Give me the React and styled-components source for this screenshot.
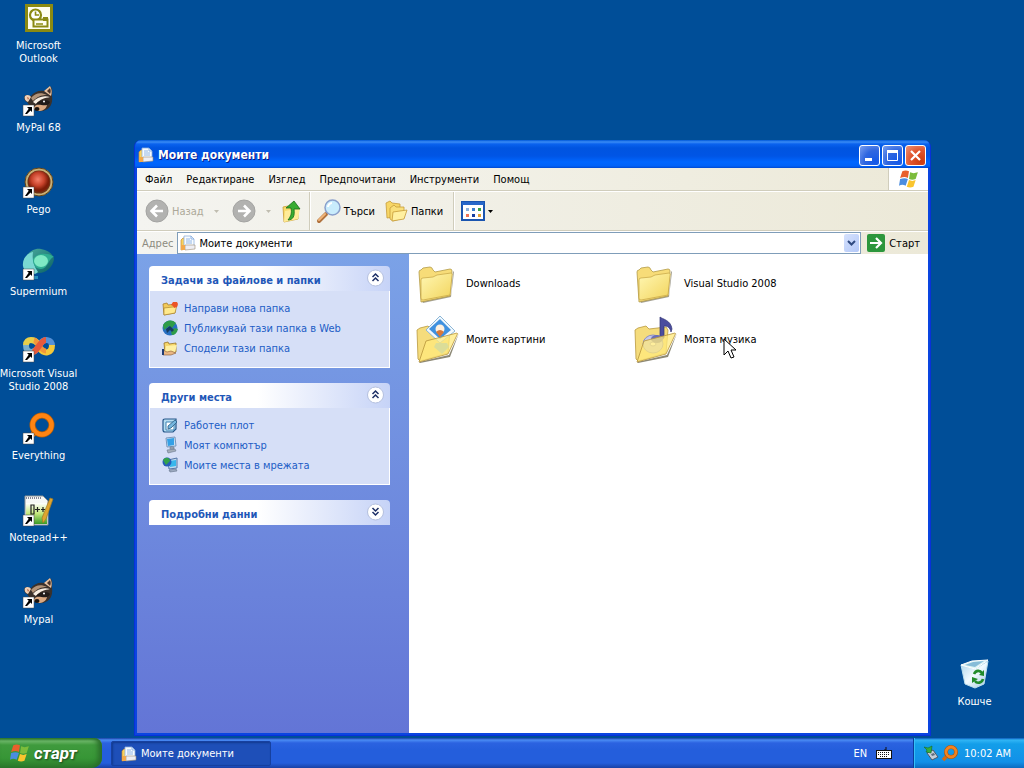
import React from 'react';
import styled, { createGlobalStyle } from 'styled-components';

const uiFont = '"DejaVu Sans Condensed", "Noto Sans", sans-serif';

const GlobalStyle = createGlobalStyle`
  * {
    box-sizing: border-box;
  }
  body {
    margin: 0;
    font-family: ${uiFont};
    font-size: 11px;
    line-height: 13px;
    cursor: default;
  }
  button, input {
    font: inherit;
    color: inherit;
  }
  svg {
    display: block;
    flex: none;
    overflow: visible;
  }
`;

const Screen = styled.div`
  min-height: 100vh;
  display: flex;
  flex-direction: column;
  overflow: hidden;
  background: #004e98;
`;

const Desktop = styled.main`
  position: relative;
  flex: 1;
`;

const IconColumn = styled.div`
  display: grid;
  grid-auto-rows: 82px;
  width: 77px;
`;

const Shortcut = styled.button`
  display: flex;
  flex-direction: column;
  align-items: center;
  gap: 5px;
  width: 77px;
  padding: 2px 0 0;
  border: 0;
  background: none;
  color: #ffffff;
  text-align: center;
`;

const ShortcutName = styled.span`
  width: 84px;
  padding: 0 ${({ $narrow }) => ($narrow ? 12 : 0)}px;
`;

const BinSpot = styled.div`
  position: absolute;
  right: 11px;
  bottom: 30px;
`;

const Window = styled.section`
  position: absolute;
  top: 140px;
  left: 134px;
  right: 93px;
  bottom: 2px;
  display: flex;
  flex-direction: column;
  padding: 0 2px 2px;
  border: solid #0831d9;
  border-width: 0 1px 1px;
  border-radius: 7px 7px 0 0;
  background: #0a45e0;
  overflow: hidden;
`;

const TitleBar = styled.header`
  display: flex;
  align-items: center;
  gap: 4px;
  height: 28px;
  margin: 0 -3px;
  padding: 2px 5px 0 4px;
  background: linear-gradient(#0058d8 0, #3a8cf5 2px, #0a62ee 4px, #0054e0 8px, #0055e5 16px, #0066ff 22px, #0062f8 26px, #0048d0 28px);
`;

const Title = styled.h1`
  flex: 1;
  margin: 0;
  color: #ffffff;
  font-size: 12px;
  line-height: 16px;
  text-shadow: 1px 1px #0a1883;
`;

const WindowControls = styled.div`
  display: flex;
  gap: 2px;
`;

const ControlButton = styled.button`
  display: grid;
  place-items: center;
  width: 21px;
  height: 21px;
  padding: 0;
  border: 1px solid #ffffff;
  border-radius: 3px;
  background: ${({ $close }) =>
    $close
      ? 'radial-gradient(circle at 80% 80%, #cc3c10, #e0552e 50%, #ee9478)'
      : 'radial-gradient(circle at 80% 80%, #1458e8, #2f66e0 50%, #7a9ff0)'};
`;

const MenuBar = styled.nav`
  display: flex;
  height: 23px;
  border-bottom: 1px solid #d0cdbc;
  background: linear-gradient(90deg, #f6f6f2, #ece9d8);
`;

const MenuItems = styled.div`
  display: flex;
  align-items: center;
  flex: 1;
  gap: 14px;
  padding-left: 8px;
`;

const MenuItem = styled.button`
  padding: 0;
  border: 0;
  background: none;
`;

const Throbber = styled.div`
  display: grid;
  place-items: center;
  width: 40px;
  border-left: 1px solid #d0cdbc;
  background: #ffffff;
`;

const Toolbar = styled.div`
  display: flex;
  align-items: center;
  height: 40px;
  padding-left: 8px;
  border-top: 1px solid #ffffff;
  border-bottom: 1px solid #d0cdbc;
  background: linear-gradient(90deg, #f4f4f0, #ece9d8);
`;

const ToolButton = styled.button`
  display: flex;
  align-items: center;
  gap: 3px;
  padding: 0;
  margin-right: ${({ $after }) => $after || 0}px;
  border: 0;
  background: none;

  &:disabled {
    color: #aca899;
  }
`;

const Divider = styled.div`
  align-self: stretch;
  width: 2px;
  margin-right: 6px;
  border-left: 1px solid #d0cdbc;
  border-right: 1px solid #ffffff;
`;

const AddressBar = styled.div`
  display: flex;
  align-items: center;
  gap: 4px;
  height: 23px;
  padding: 0 8px 0 5px;
  border-top: 1px solid #ffffff;
  background: linear-gradient(90deg, #f4f4f0, #ece9d8);
`;

const AddressLabel = styled.label`
  color: #8d8b80;
`;

const AddressBox = styled.div`
  display: flex;
  align-items: center;
  flex: 1;
  gap: 3px;
  height: 22px;
  padding: 0 1px 0 2px;
  border: 1px solid #7f9db9;
  background: #ffffff;
`;

const AddressInput = styled.input`
  flex: 1;
  min-width: 0;
  padding: 0;
  border: 0;
  outline: 0;
  background: none;
`;

const DropButton = styled.button`
  display: grid;
  place-items: center;
  width: 15px;
  height: 18px;
  padding: 0;
  border: 0;
  border-radius: 2px;
  background: linear-gradient(135deg, #d6e2fd, #b3c8f8);
`;

const GoButton = styled(ToolButton)`
  gap: 4px;
  margin-left: 2px;
`;

const Content = styled.div`
  display: flex;
  flex: 1;
  min-height: 0;
`;

const Sidebar = styled.aside`
  display: flex;
  flex-direction: column;
  gap: 15px;
  width: 272px;
  padding: 12px 19px 12px 12px;
  background: linear-gradient(#7ba2e7, #6375d6);
`;

const Panel = styled.section`
  border-radius: 4px 4px 0 0;
  overflow: hidden;
`;

const PanelHeader = styled.button`
  display: flex;
  align-items: center;
  justify-content: space-between;
  width: 100%;
  height: 25px;
  padding: 0 5px 0 12px;
  border: 0;
  background: linear-gradient(90deg, #ffffff 45%, #c6d3f7);
  color: #1f57b8;
  font-weight: bold;

  span {
    padding-top: 3px;
  }
`;

const PanelBody = styled.div`
  display: grid;
  gap: 4px;
  padding: 9px 12px 11px;
  border: 1px solid #ffffff;
  border-top: 0;
  background: #d6dff7;
`;

const TaskLink = styled.a`
  display: flex;
  align-items: center;
  gap: 6px;
  color: #215dc6;
  text-decoration: none;
`;

const FileGrid = styled.div`
  display: grid;
  flex: 1;
  grid-template-columns: repeat(auto-fill, 218px);
  grid-auto-rows: 56px;
  padding: 2px 0 0 5px;
  background: #ffffff;
`;

const FileItem = styled.button`
  position: relative;
  display: flex;
  align-items: center;
  gap: 4px;
  padding: 0 0 2px;
  border: 0;
  background: none;
`;

const PointerSpot = styled.span`
  position: absolute;
  top: 26px;
  left: 91px;
`;

const Taskbar = styled.footer`
  display: flex;
  height: 30px;
  color: #ffffff;
  background: linear-gradient(#1941a5 0, #4a8cf4 2px, #2b62e0 5px, #245edc 12px, #245edc 25px, #1941a5 30px);
`;

const StartButton = styled.button`
  display: flex;
  align-items: center;
  gap: 4px;
  width: 102px;
  padding: 0 0 0 10px;
  border: 0;
  border-radius: 0 8px 10px 0;
  background: linear-gradient(#2b7a2b 0, #6fba6b 3px, #3f9a3d 7px, #379636 20px, #2b7a2b 30px);
  box-shadow: inset -4px 0 5px #2a6e2a;
  font-family: Roboto, "Liberation Sans", sans-serif;
  font-size: 17px;
  font-style: italic;
  font-weight: bold;
  line-height: 20px;
  text-shadow: 1px 1px 2px #1c451c;
`;

const TaskButton = styled.button`
  display: flex;
  align-items: center;
  gap: 4px;
  width: 160px;
  margin: 3px auto 2px 9px;
  padding: 0 10px 0 9px;
  border: 1px solid #16409f;
  border-radius: 2px;
  background: #1e4fb8;
  box-shadow: inset 1px 1px 2px #123a8f;
`;

const Language = styled.div`
  display: flex;
  align-items: center;
  gap: 9px;
  padding-right: 21px;
`;

const Tray = styled.div`
  display: flex;
  align-items: center;
  gap: 4px;
  padding: 0 13px 0 9px;
  border-left: 1px solid #0a3e9c;
  background: linear-gradient(#0c59b9 0, #31b5f5 2px, #139ee9 6px, #1290e8 24px, #0c6bc0 30px);
  box-shadow: inset 1px 0 #35c0f8;

  time {
    margin-left: 2px;
  }
`;

function ShortcutArrow() {
  return (
    <g>
      <path d="M0 21h11v11H0z" fill="#fff" stroke="#444" strokeWidth=".5" />
      <path d="M4 23h5v5L7.500 26.500 4 30H2l3.700-5.200z" fill="#000" />
    </g>
  );
}

function OutlookIcon() {
  return (
    <svg width="32" height="32" viewBox="0 0 32 32">
      <path d="M2 2h28v28H2z" fill="#8b8a12" />
      <path d="M5 5h22v22H5z" fill="#fffef0" />
      <circle cx="12.500" cy="13" r="5.500" fill="#fff" stroke="#8b8a12" strokeWidth="2.200" />
      <path d="M12.500 9.500V13H16" fill="none" stroke="#8b8a12" strokeWidth="1.600" />
      <path d="M10.500 17.500h14v7h-14z" fill="#fffef0" stroke="#8b8a12" strokeWidth="2" />
      <path d="M20 15h5v4h-5z" fill="#8b8a12" />
      <path d="M13 22h7" stroke="#8b8a12" strokeWidth="1.500" />
    </svg>
  );
}

function RaccoonIcon() {
  return (
    <svg width="32" height="32" viewBox="0 0 32 32">
      <path d="M4 18C1 17 0 12 3 11l5 1c3-4 8-6 13-5l6-5c3 2 2 7 2 10 1 8-2 13-9 15-7 1-12-3-16-9z" fill="#3b312b" />
      <path d="M2 12c2-2 5-1 6 1l-3 5c-3-1-4-4-3-6z" fill="#f0d0b6" />
      <path d="M4 13l2 1-1 2z" fill="#b5603e" />
      <path d="M21 7l6-5c2 3 2 7 1 10z" fill="#e8c3a4" />
      <path d="M24 7l3-3c1 2 1 4 0 6z" fill="#4a352b" />
      <path d="M8 14c4-5 10-6 16-3-6 0-10 2-14 6z" fill="#b29378" />
      <path d="M10 18c4-5 11-7 17-5-5 1-10 2-14 7z" fill="#f8eee2" />
      <path d="M13 20c4-5 12-5 14-2-1 3-5 4-8 4z" fill="#211b19" />
      <path d="M12 22c3-3 7 0 12-1-1 4-4 6-9 6-4-1-5-3-3-5z" fill="#dba981" />
      <ellipse cx="14" cy="25" rx="2.500" ry="2" fill="#17120f" />
      <circle cx="21" cy="17.500" r="1" fill="#fff" />
      <ShortcutArrow />
    </svg>
  );
}

function PegoIcon() {
  return (
    <svg width="32" height="32" viewBox="0 0 32 32">
      <defs>
        <radialGradient id="pego" cx=".45" cy=".4">
          <stop offset="0" stopColor="#f4806a" />
          <stop offset=".6" stopColor="#c8432b" />
          <stop offset="1" stopColor="#7c1d08" />
        </radialGradient>
      </defs>
      <circle cx="16" cy="16" r="14" fill="#c8b077" stroke="#634418" />
      <circle cx="16" cy="16" r="11.500" fill="#6e3216" />
      <circle cx="16" cy="15.500" r="10.500" fill="url(#pego)" />
      <ShortcutArrow />
    </svg>
  );
}

function SupermiumIcon() {
  return (
    <svg width="32" height="32" viewBox="0 0 32 32">
      <defs>
        <linearGradient id="sm" x1="0" y1="0" x2="1" y2="1">
          <stop offset="0" stopColor="#4cae9f" />
          <stop offset="1" stopColor="#075f64" />
        </linearGradient>
      </defs>
      <path d="M1 14C4 4 11 0 18 1c7 1 12 5 13 10-1 8-8 14-15 14C9 26 2 22 1 14z" fill="url(#sm)" />
      <path d="M0 18C-1 11 4 5 10 4c-1 7 0 13 5 20-5 5-14 1-15-6z" fill="#7ad8d2" />
      <path d="M10 11c4-7 17-6 21-2-5 0-6 12-13 12-5 0-8-4-8-10z" fill="#2fae92" />
      <ellipse cx="18" cy="13" rx="7" ry="6" fill="#7fe9c4" />
      <path d="M11 28h4v3h-4z" fill="#2590bd" />
      <ShortcutArrow />
    </svg>
  );
}

function VisualStudioIcon() {
  return (
    <svg width="32" height="32" viewBox="0 0 32 32">
      <g fill="none" strokeWidth="6">
        <path d="M15 14C12 9 3 8 3 15" stroke="#e8cf4a" />
        <path d="M3 15c0 8 7 9 12 3" stroke="#78aecd" />
        <path d="M17 14c4-6 12-5 12 2" stroke="#5590d6" />
        <path d="M29 15c0 9-8 9-12 4" stroke="#f3c83a" />
        <path d="M11 10c4 1 6 11 12 11" stroke="#f2963a" strokeWidth="5" />
        <path d="M9 22c5 1 8-12 14-12" stroke="#e65a3c" />
      </g>
      <ShortcutArrow />
    </svg>
  );
}

function EverythingIcon() {
  return (
    <svg width="32" height="32" viewBox="0 0 32 32">
      <path d="M12 20l-6 7" stroke="#ff8412" strokeWidth="5" />
      <circle cx="19" cy="13" r="9.500" fill="none" stroke="#b65e08" strokeWidth="6" />
      <circle cx="19" cy="13" r="9.500" fill="none" stroke="#ff8412" strokeWidth="4.500" />
      <ShortcutArrow />
    </svg>
  );
}

function NotepadIcon() {
  return (
    <svg width="32" height="32" viewBox="0 0 32 32">
      <defs>
        <linearGradient id="grass" x2="0" y2="1">
          <stop offset="0" stopColor="#fff" />
          <stop offset=".5" stopColor="#c4e87c" />
          <stop offset="1" stopColor="#3a9a26" />
        </linearGradient>
      </defs>
      <path d="M2 2h18l5 5v24H2z" fill="#f6f8f6" stroke="#8c9295" />
      <path d="M3 9h21v21H3z" fill="url(#grass)" />
      <path d="M3 4h16" stroke="#889" strokeWidth="2" strokeDasharray="1 1" />
      <path d="M8 11h3v9H8zM12 15.500h5m-2.500-2.500v5M18 15.500h4m-2-2.500v5" fill="none" stroke="#222" strokeWidth="1.200" />
      <path d="M27 4l3 1-7 20-3 4-1-5z" fill="#e0a52f" stroke="#a07a24" strokeWidth=".7" />
      <ShortcutArrow />
    </svg>
  );
}

function RecycleIcon() {
  return (
    <svg width="32" height="32" viewBox="0 0 32 32">
      <defs>
        <linearGradient id="bin" x2="1" y2="1">
          <stop offset="0" stopColor="#a9d3ea" />
          <stop offset=".5" stopColor="#f1faff" />
          <stop offset="1" stopColor="#9dc4df" />
        </linearGradient>
      </defs>
      <path d="M2 7l14 4 13-8-4 23-9 4-10-4z" fill="url(#bin)" stroke="#bde0ef" />
      <path d="M2 7l11-4 16-1-13 9z" fill="#ddf4f6" stroke="#fff" />
      <path d="M6 7l8-3 11-1-9 6z" fill="#86bcd8" />
      <g fill="none" stroke="#218b2b" strokeWidth="2.600">
        <path d="M15 16c2-4 6-4 8-1" />
        <path d="M24 21c-1 4-6 5-8 2" />
      </g>
      <path d="M25 12v6l-5-1zM13 25v-6l6 2z" fill="#218b2b" />
    </svg>
  );
}

function DocumentsIcon() {
  return (
    <svg width="16" height="16" viewBox="0 0 16 16">
      <path d="M1 5l2-2h3v11l-5 1z" fill="#fbd25c" stroke="#c08a34" strokeWidth=".7" />
      <path d="M4 1h7l3 3v8H4z" fill="#f8fcff" stroke="#8fb0dc" strokeWidth=".8" />
      <path d="M11 1v3h3M6 4h4M6 6h6M6 8h6" stroke="#77a3df" strokeWidth=".8" fill="none" />
      <path d="M5 10h10v4l-10 1z" fill="#eeeef4" stroke="#9c8c72" strokeWidth=".6" />
      <path d="M1 10h4v5H1z" fill="#f3a94b" />
    </svg>
  );
}

function WindowsFlag({ size = 18 }) {
  return (
    <svg width={size} height={size} viewBox="0 0 18 18">
      <path d="M3 2c2-1 4-1 6 0L8 8C6 7 4 7 1 8z" fill="#e8602c" />
      <path d="M10 3c2 1 4 1 7 0l-2 6c-2 1-4 1-6 0z" fill="#7cbc3b" />
      <path d="M1 9c3-1 5-1 7 0l-2 6c-2-1-4-1-6 0z" fill="#4b8de0" />
      <path d="M9 10c2 1 4 1 6 0l-2 6c-2 1-4 1-6 0z" fill="#fac52e" />
    </svg>
  );
}

function NavArrow({ forward }) {
  return (
    <svg width="24" height="24" viewBox="0 0 24 24">
      <circle cx="12" cy="12" r="11" fill="#b2b2b0" stroke="#a4a4a2" />
      <path
        d={forward ? 'M6 12h11M12 6.500l5.500 5.500-5.500 5.500' : 'M18 12H7m5-5.500L6.500 12l5.500 5.500'}
        fill="none"
        stroke="#fff"
        strokeWidth="2.600"
      />
    </svg>
  );
}

function Caret({ color = '#000' }) {
  return (
    <svg width="5" height="3" viewBox="0 0 5 3">
      <path d="M0 0h5L2.500 3z" fill={color} />
    </svg>
  );
}

function UpIcon() {
  return (
    <svg width="22" height="24" viewBox="0 0 22 24">
      <path d="M2 8l5-1 2 2 8-1v12l-14 3z" fill="#f8db69" stroke="#c99c35" strokeWidth=".8" />
      <path d="M4 12l15-3-2 11-14 3z" fill="#ffec98" />
      <path d="M7 21c5 0 7-4 6-11h6l-6-8-8 7h5c1 5 0 8-3 12z" fill="#38ac31" stroke="#176c19" strokeWidth=".8" />
    </svg>
  );
}

function SearchIcon() {
  return (
    <svg width="24" height="24" viewBox="0 0 24 24">
      <path d="M9 15l-7 7" stroke="#b0713c" strokeWidth="4" strokeLinecap="round" />
      <path d="M8 15l-6 6" stroke="#efb479" strokeWidth="2" strokeLinecap="round" />
      <circle cx="15.500" cy="8.500" r="7.500" fill="#c9ecfc" stroke="#8aa0cc" strokeWidth="1.500" />
      <path d="M11 8c0-2 2-4 4-4" fill="none" stroke="#fff" strokeWidth="2" />
    </svg>
  );
}

function FoldersIcon() {
  return (
    <svg width="23" height="22" viewBox="0 0 23 22">
      <g stroke="#c79c38" strokeWidth=".8">
        <path d="M1 3l4-2 2 2 8 1v12l-13 2z" fill="#f7d666" />
        <path d="M5 8l4-3 2 2h8v11L8 21l-3-2z" fill="#f9df7a" />
        <path d="M8 12l14-2-3 9-12 2z" fill="#fff0a0" />
      </g>
    </svg>
  );
}

function ViewsIcon() {
  return (
    <svg width="24" height="20" viewBox="0 0 24 20">
      <path d="M1 1h22v18H1z" fill="#fff" stroke="#1a55b0" strokeWidth="2" />
      <path d="M1 1h22v3H1z" fill="#2767c9" />
      <path d="M5 7h3v3H5z" fill="#8cb0dc" />
      <path d="M11 7h3v3h-3z" fill="#3a80cd" />
      <path d="M17 7h3v3h-3z" fill="#35a243" />
      <path d="M5 13h3v3H5z" fill="#ef7355" />
      <path d="M11 13h3v3h-3z" fill="#173ea0" />
      <path d="M17 13h3v3h-3z" fill="#e3a131" />
    </svg>
  );
}

function GoIcon() {
  return (
    <svg width="18" height="18" viewBox="0 0 18 18">
      <rect width="18" height="18" rx="2" fill="#2c963c" />
      <path d="M3 9h11M9 4l5 5-5 5" fill="none" stroke="#fff" strokeWidth="2.200" />
    </svg>
  );
}

function ChevronCircle({ down }) {
  return (
    <svg width="19" height="19" viewBox="0 0 19 19">
      <circle cx="9.500" cy="9" r="8" fill="#fff" stroke="#b3bfde" />
      <path
        d={down ? 'M6.500 5l3 3 3-3M6.500 9l3 3 3-3' : 'M6.500 8l3-3 3 3M6.500 12l3-3 3 3'}
        fill="none"
        stroke="#1d2f66"
        strokeWidth="1.500"
      />
    </svg>
  );
}

function NewFolderIcon() {
  return (
    <svg width="16" height="16" viewBox="0 0 16 16">
      <path d="M1 4l4-1 1 2 8-1-1 9-11 2z" fill="#f2c957" stroke="#a9802c" strokeWidth=".8" />
      <path d="M2 8l9-1 4-2-2 8-11 2z" fill="#ffe98c" stroke="#a17926" strokeWidth=".6" />
      <path d="M11 2h4l1 2-1 3-3 1-1-2-2-1z" fill="#eb5425" />
    </svg>
  );
}

function WebIcon() {
  return (
    <svg width="16" height="16" viewBox="0 0 16 16">
      <circle cx="8" cy="8" r="7.500" fill="#276fc2" />
      <path d="M1 5c3-5 9-6 13-2l-4 5-3-2-5 4zM9 12l3-4 4 1c-1 4-3 6-6 6z" fill="#2f9c48" />
      <path d="M4 9l4-3 4 4-2 2-2-2-3 3z" fill="#163d61" />
    </svg>
  );
}

function ShareFolderIcon() {
  return (
    <svg width="16" height="16" viewBox="0 0 16 16">
      <path d="M2 3l4-1 1 2 7-1v9L3 13z" fill="#f6d66a" stroke="#997428" strokeWidth=".8" />
      <path d="M4 6l11-1-2 7H3z" fill="#fff0a3" />
      <path d="M1 10l4 2 4-1 5 2-5 2H1z" fill="#e9b785" stroke="#87552e" strokeWidth=".6" />
      <path d="M0 9h2v6H0z" fill="#203c72" />
    </svg>
  );
}

function DesktopSmallIcon() {
  return (
    <svg width="16" height="16" viewBox="0 0 16 16">
      <path d="M1 4q0-2 2-2h11v10l-3 3H3q-2 0-2-2z" fill="#b6dcf0" stroke="#24568a" strokeWidth="1.200" />
      <path d="M4 5h8v8H4z" fill="#fff" stroke="#3d84b5" />
      <path d="M6 9l7-6 2 2-6 6-3 1z" fill="#74b6de" stroke="#285c84" strokeWidth=".8" />
    </svg>
  );
}

function ComputerIcon() {
  return (
    <svg width="16" height="16" viewBox="0 0 16 16">
      <path d="M4 1l9-1 1 9-9 1z" fill="#c7dff3" stroke="#7896bb" />
      <path d="M5 2l7-1v7l-6 1z" fill="#34a0e6" />
      <path d="M8 10h4v2H8zM5 13l8-1 1 2-8 2z" fill="#a4adb9" stroke="#69788e" strokeWidth=".6" />
    </svg>
  );
}

function NetworkIcon() {
  return (
    <svg width="16" height="16" viewBox="0 0 16 16">
      <path d="M6 3l9-2v10l-8 1z" fill="#bfdcf0" stroke="#5375a7" />
      <path d="M7 4l7-1v6l-6 1z" fill="#38b7ec" />
      <circle cx="5" cy="5" r="4.500" fill="#265dba" />
      <path d="M1 3c3-4 7-2 7 1L4 8z" fill="#33a34a" />
      <path d="M7 13l7-1 1 2-7 1z" fill="#9caac0" stroke="#65748b" strokeWidth=".6" />
    </svg>
  );
}

function FolderIcon() {
  return (
    <svg width="48" height="48" viewBox="0 0 48 48">
      <defs>
        <linearGradient id="folder" x2="1" y2="1">
          <stop offset="0" stopColor="#fff7b3" />
          <stop offset="1" stopColor="#f2d45c" />
        </linearGradient>
      </defs>
      <path d="M8 42l29-6 2-24 1 1-3 25-28 6z" fill="#8e8b7b" opacity=".8" />
      <path d="M5 13q0-2 2-2l2-2 7-1q2 0 3 3l2 2 15-3q2 0 2 2l-2 25-29 6z" fill="#f7dc78" stroke="#b39a48" strokeWidth=".8" />
      <path d="M7 21q0-2 2-2l10-1 4-2 14-2q2 0 1 3l-2 19-27 5q-2 0-2-2z" fill="url(#folder)" stroke="#c4a443" strokeWidth=".7" />
    </svg>
  );
}

function OpenFolder({ children }) {
  return (
    <svg width="48" height="48" viewBox="0 0 48 48">
      <path d="M5 47l30-7 10-22-9 24-30 6z" fill="#8c8875" />
      <path d="M3 15l3-2 8-2 3 3 17-2 2 3-2 23-28 8-2-2z" fill="#f5dc7c" stroke="#b9993f" strokeWidth=".8" />
      {children}
      <path d="M12 26l31-8q1 0 0 2l-9 19-29 8z" fill="#ffe97c" fillOpacity=".75" stroke="#b8943a" strokeWidth=".8" />
    </svg>
  );
}

function PicturesIcon() {
  return (
    <OpenFolder>
      <path d="M26 1l15 15-15 12-14-13z" fill="#f1f8fd" stroke="#8cb6d6" />
      <path d="M26 4l11 11-11 9-11-10z" fill="#3f91df" />
      <circle cx="26" cy="14" r="4.500" fill="#fff1df" />
      <path d="M22 17q4-4 8 0l-4 5z" fill="#d9793a" />
      <path d="M22 28h11l2 4-7 7-8-7z" fill="#6fb8ea" />
    </OpenFolder>
  );
}

function MusicIcon() {
  return (
    <OpenFolder>
      <ellipse cx="21" cy="29" rx="10" ry="9" fill="#c5c7eb" stroke="#8b8ec6" />
      <ellipse cx="21" cy="29" rx="3" ry="2" fill="#fff" stroke="#9295c9" />
      <path d="M28 2c2 2 11 3 12 12l-1 3c-1-5-4-6-7-6v12l-4 2z" fill="#4b4d9e" stroke="#313474" strokeWidth=".7" />
      <ellipse cx="25" cy="24" rx="6" ry="4" fill="#6a6db8" />
    </OpenFolder>
  );
}

function Pointer() {
  return (
    <svg width="13" height="22" viewBox="0 0 13 22">
      <path d="M1 1v16l4-4 3 7 3-1-3-7h5z" fill="#fff" stroke="#000" />
    </svg>
  );
}

function KeyboardIcon() {
  return (
    <svg width="16" height="12" viewBox="0 0 16 12">
      <path d="M10 0v3H8" fill="none" stroke="#111" />
      <rect x=".5" y="3.500" width="15" height="8" fill="#fff" stroke="#111" />
      <path d="M2 5.500h12M2 7.500h12M4 9.500h8" stroke="#111" strokeDasharray="1 1" />
    </svg>
  );
}

function UsbIcon() {
  return (
    <svg width="15" height="16" viewBox="0 0 15 16">
      <path d="M4 8l6-3 5 7-6 3z" fill="#c5ced8" stroke="#4c5968" />
      <path d="M8 9l3-1 1 2-3 1z" fill="#5d6c7c" />
      <path d="M1 2l4 1 4-2-1 7-5-1 1-2z" fill="#35ae3c" stroke="#156c24" strokeWidth=".6" />
    </svg>
  );
}

function TraySearchIcon() {
  return (
    <svg width="16" height="16" viewBox="0 0 16 16">
      <path d="M5 11l-4 4" stroke="#d46c13" strokeWidth="3.500" />
      <circle cx="9" cy="7" r="5" fill="none" stroke="#a8560e" strokeWidth="4" />
      <circle cx="9" cy="7" r="5" fill="none" stroke="#f18320" strokeWidth="2.800" />
    </svg>
  );
}

const shortcuts = [
  { name: 'Microsoft Outlook', Icon: OutlookIcon, narrow: true },
  { name: 'MyPal 68', Icon: RaccoonIcon },
  { name: 'Pego', Icon: PegoIcon },
  { name: 'Supermium', Icon: SupermiumIcon },
  { name: 'Microsoft Visual Studio 2008', Icon: VisualStudioIcon },
  { name: 'Everything', Icon: EverythingIcon },
  { name: 'Notepad++', Icon: NotepadIcon },
  { name: 'Mypal', Icon: RaccoonIcon }
];

const menu = ['Файл', 'Редактиране', 'Изглед', 'Предпочитани', 'Инструменти', 'Помощ'];

const panels = [
  {
    title: 'Задачи за файлове и папки',
    links: [
      { text: 'Направи нова папка', Icon: NewFolderIcon },
      { text: 'Публикувай тази папка в Web', Icon: WebIcon },
      { text: 'Сподели тази папка', Icon: ShareFolderIcon }
    ]
  },
  {
    title: 'Други места',
    links: [
      { text: 'Работен плот', Icon: DesktopSmallIcon },
      { text: 'Моят компютър', Icon: ComputerIcon },
      { text: 'Моите места в мрежата', Icon: NetworkIcon }
    ]
  },
  { title: 'Подробни данни', links: [] }
];

const files = [
  { name: 'Downloads', Icon: FolderIcon },
  { name: 'Visual Studio 2008', Icon: FolderIcon },
  { name: 'Моите картини', Icon: PicturesIcon },
  { name: 'Моята музика', Icon: MusicIcon, hovered: true }
];

function SidePanel({ title, links }) {
  const open = links.length > 0;
  return (
    <Panel>
      <PanelHeader aria-expanded={open}>
        <span>{title}</span>
        <ChevronCircle down={!open} />
      </PanelHeader>
      {open && (
        <PanelBody>
          {links.map(({ text, Icon }) => (
            <TaskLink href="#" key={text}>
              <Icon />
              {text}
            </TaskLink>
          ))}
        </PanelBody>
      )}
    </Panel>
  );
}

function ExplorerWindow() {
  return (
    <Window>
      <TitleBar>
        <DocumentsIcon />
        <Title>Моите документи</Title>
        <WindowControls>
          <ControlButton aria-label="Minimize">
            <svg width="15" height="15" viewBox="0 0 15 15">
              <path d="M3 10h7v3H3z" fill="#fff" />
            </svg>
          </ControlButton>
          <ControlButton aria-label="Maximize">
            <svg width="15" height="15" viewBox="0 0 15 15">
              <path d="M2.500 3v9.500h10V3M2 3h11" fill="none" stroke="#fff" />
              <path d="M2 2h11v3H2z" fill="#fff" />
            </svg>
          </ControlButton>
          <ControlButton $close aria-label="Close">
            <svg width="15" height="15" viewBox="0 0 15 15">
              <path d="M3 3l9 9M12 3l-9 9" stroke="#fff" strokeWidth="2.200" />
            </svg>
          </ControlButton>
        </WindowControls>
      </TitleBar>
      <MenuBar>
        <MenuItems>
          {menu.map((item) => (
            <MenuItem key={item}>{item}</MenuItem>
          ))}
        </MenuItems>
        <Throbber>
          <WindowsFlag size={20} />
        </Throbber>
      </MenuBar>
      <Toolbar>
        <ToolButton disabled $after={10}>
          <NavArrow />
          Назад
        </ToolButton>
        <ToolButton disabled aria-label="Back history" $after={13}>
          <Caret color="#c0bdb0" />
        </ToolButton>
        <ToolButton disabled aria-label="Forward" $after={10}>
          <NavArrow forward />
        </ToolButton>
        <ToolButton disabled aria-label="Forward history" $after={10}>
          <Caret color="#c0bdb0" />
        </ToolButton>
        <ToolButton aria-label="Up" $after={6}>
          <UpIcon />
        </ToolButton>
        <Divider />
        <ToolButton $after={10}>
          <SearchIcon />
          Търси
        </ToolButton>
        <ToolButton $after={10}>
          <FoldersIcon />
          Папки
        </ToolButton>
        <Divider />
        <ToolButton aria-label="Views">
          <ViewsIcon />
          <Caret />
        </ToolButton>
      </Toolbar>
      <AddressBar>
        <AddressLabel htmlFor="address">Адрес</AddressLabel>
        <AddressBox>
          <DocumentsIcon />
          <AddressInput id="address" defaultValue="Моите документи" />
          <DropButton aria-label="Show addresses">
            <svg width="9" height="6" viewBox="0 0 9 6">
              <path d="M1 1l3.500 3.500L8 1" fill="none" stroke="#2f4a80" strokeWidth="2" />
            </svg>
          </DropButton>
        </AddressBox>
        <GoButton>
          <GoIcon />
          Старт
        </GoButton>
      </AddressBar>
      <Content>
        <Sidebar>
          {panels.map((panel) => (
            <SidePanel key={panel.title} {...panel} />
          ))}
        </Sidebar>
        <FileGrid>
          {files.map(({ name, Icon, hovered }) => (
            <FileItem key={name}>
              <Icon />
              {name}
              {hovered && (
                <PointerSpot>
                  <Pointer />
                </PointerSpot>
              )}
            </FileItem>
          ))}
        </FileGrid>
      </Content>
    </Window>
  );
}

function App() {
  return (
    <Screen>
      <GlobalStyle />
      <Desktop>
        <IconColumn>
          {shortcuts.map(({ name, Icon, narrow }) => (
            <Shortcut key={name}>
              <Icon />
              <ShortcutName $narrow={narrow}>{name}</ShortcutName>
            </Shortcut>
          ))}
        </IconColumn>
        <BinSpot>
          <Shortcut>
            <RecycleIcon />
            <ShortcutName>Кошче</ShortcutName>
          </Shortcut>
        </BinSpot>
        <ExplorerWindow />
      </Desktop>
      <Taskbar>
        <StartButton>
          <WindowsFlag size={20} />
          старт
        </StartButton>
        <TaskButton>
          <DocumentsIcon />
          Моите документи
        </TaskButton>
        <Language>
          EN
          <KeyboardIcon />
        </Language>
        <Tray>
          <UsbIcon />
          <TraySearchIcon />
          <time>10:02 AM</time>
        </Tray>
      </Taskbar>
    </Screen>
  );
}

export default App;
